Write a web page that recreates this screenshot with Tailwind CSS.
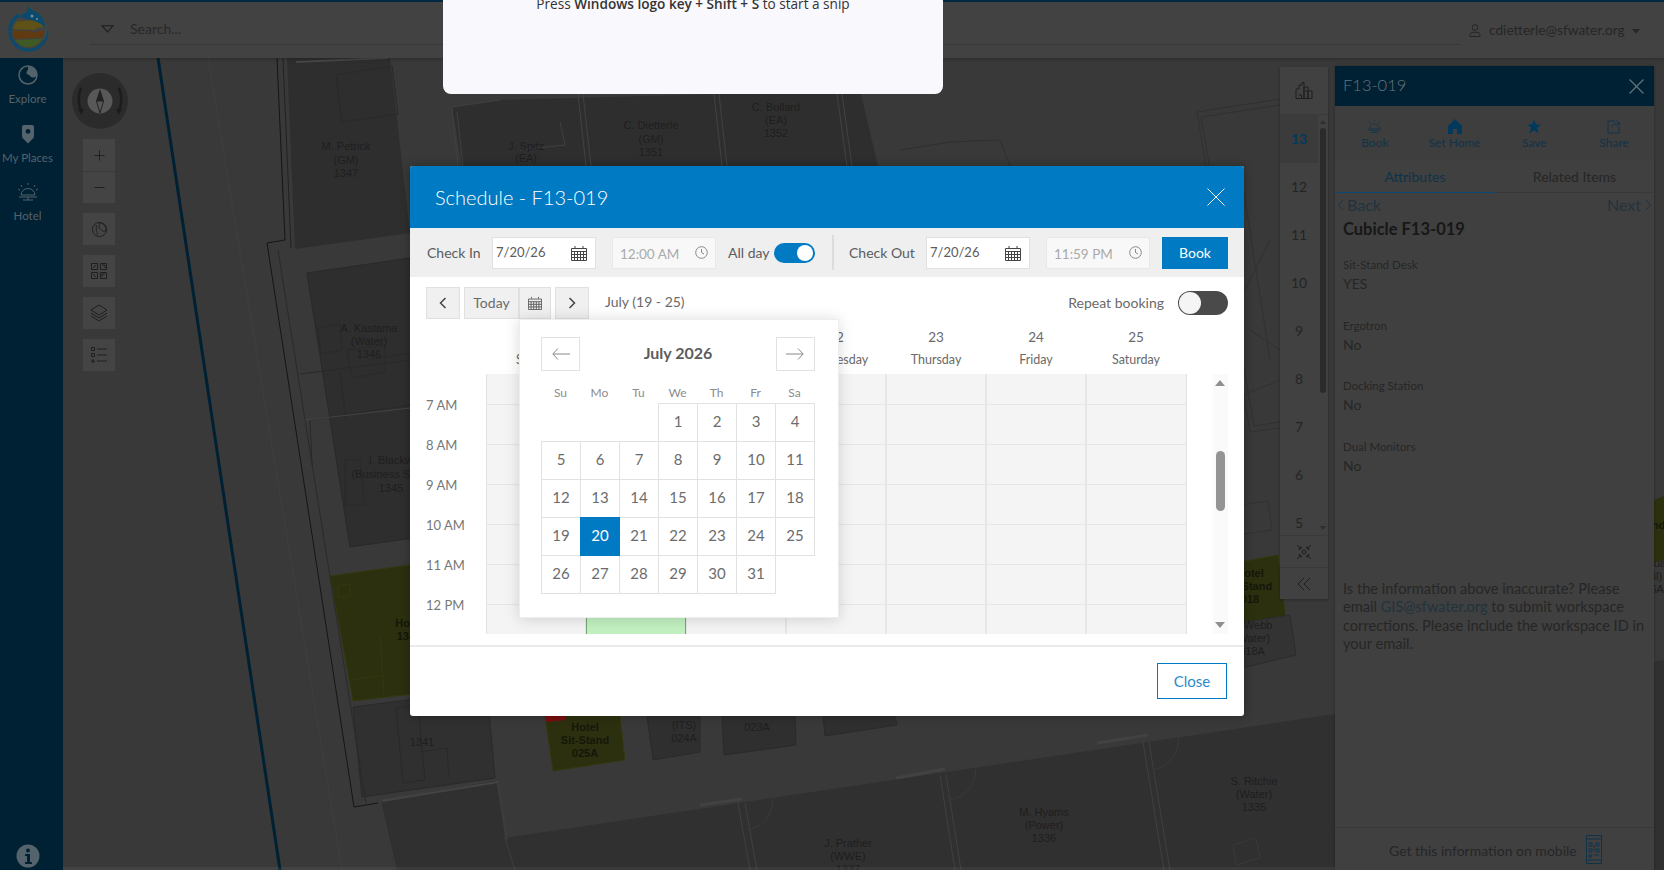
<!DOCTYPE html>
<html lang="en">
<head>
<meta charset="utf-8">
<title>Schedule - F13-019</title>
<script src="https://cdn.jsdelivr.net/npm/@tailwindcss/browser@4"></script>
</head>
<body class="m-0">
<div class="relative w-[1664px] h-[870px] overflow-hidden bg-[#393939] font-['Lato',sans-serif] flex flex-col">

  <!-- floor plan canvas -->
  <svg class="absolute inset-0" width="1664" height="870" viewBox="0 0 1664 870" fill="none">
    <path d="M208 58 L342 870" stroke="#3f3f3f"/>
    <path d="M158 58 L280 870" stroke="#002033" stroke-width="3"/>
    <!-- left rooms -->
    <path d="M287 58 L390 58 L410 233 L295 249 Z" fill="#2e2e2e"/>
    <path d="M307 273 L430 255 L470 530 L350 547 Z" fill="#2e2e2e" stroke="#292929"/>
    <path d="M330 576 L430 562 L447 690 L353 701 Z" fill="#2c300f" stroke="#34390f"/>
    <path d="M353 707 L487 690 L495 778 L362 797 Z" fill="#303030" stroke="#292929"/>
    <path d="M277 58 L285 240 L267 243 L354 807 L378 803" stroke="#151515"/>
    <path d="M283 58 L291 248" stroke="#222"/>
    <path d="M278 250 L366 803" stroke="#2a2a2a"/>
    <path d="M296 62 L388 58" stroke="#474747" stroke-width="2"/>
    <path d="M336 75 L392 66 L398 114 L342 122 Z M366 360 L430 350 M318 328 L340 324 L342 350 L321 354 Z M347 350 L385 345 L385 372 L352 378 Z M300 374 L410 360 M310 420 L410 405 M345 460 L360 460 L365 505 L345 505 Z" stroke="#292929"/>
    <path d="M310 420 L312 465 M340 372 L346 420" stroke="#292929"/>
    <path d="M305 420 L410 408" stroke="#444"/>
    <path d="M338 586 L350 584 L350 596 L338 598 Z M380 635 L384 695 M350 680 L383 675" stroke="#333810"/>
    <path d="M396 708 L418 705 L425 780 L403 783 Z M420 752 L447 748 L449 775" stroke="#292929"/>
    <!-- top rooms -->
    <path d="M452 107 L500 100 L860 90 L878 166 L462 166 Z" fill="#2e2e2e"/>
    <path d="M578 94 L586 166 M583 94 L591 166 M714 94 L722 166 M719 94 L727 166 M837 94 L847 166 M842 94 L852 166" stroke="#424242"/>
    <path d="M452 107 L500 100 M452 107 L458 166 M457 112 L463 166 M560 122 L565 145 L520 150" stroke="#404040"/>
    <path d="M900 150 L950 142 L1000 140 L1010 166" stroke="#2f2f2f"/>
    <path d="M1197 112 L1280 99 M1201 117 L1280 105 M1197 112 L1250 432 L1280 428 M1201 117 L1254 426 L1280 422 M1242 180 L1270 360 M1270 240 L1230 320 M1244 395 L1280 380" stroke="#313131"/>
    <path d="M1240 505 L1268 501 L1272 530 L1244 534 M1250 330 L1280 350" stroke="#313131"/>
    <!-- green desks -->
    <path d="M1240 562 L1278 555 L1286 620 L1240 628 Z" fill="#2c300f" stroke="#34390f"/>
    <path d="M1225 625 L1290 615 L1296 655 L1225 672 Z" fill="#333" stroke="#2c2c2c"/>
    <path d="M1654 500 L1664 496 L1664 560 L1654 562 Z" fill="#2c300f"/>
    <path d="M545 716 L620 716 L625 760 L553 771 Z" fill="#2c300f" stroke="#34390f"/>
    <path d="M545 716 L566 716 L566 720 L546 722 Z" fill="#7a0f0f"/>
    <path d="M647 716 L700 716 L700 752 L653 760 Z" fill="#2f2f2f" stroke="#2a2a2a"/>
    <path d="M722 716 L795 716 L796 745 L724 755 Z" fill="#2f2f2f" stroke="#2a2a2a"/>
    <path d="M823 716 L895 716 L897 725 L825 736 Z" fill="#2f2f2f" stroke="#2a2a2a"/>
    <!-- bottom rooms -->
    <path d="M380 800 L496 780 L505 838 L1335 714 L1664 660 L1664 870 L395 870 Z" fill="#303030"/>
    <path d="M496 780 L380 800 L396 870 M505 838 L515 870 M498 782 L507 840" stroke="#3f3f3f"/>
    <path d="M382 801 L498 782" stroke="#444" stroke-width="2"/>
    <path d="M700 805 L742 799 M896 778 L945 769 M1097 743 L1148 735" stroke="#424242" stroke-width="3"/>
    <path d="M738 803 L750 870 M745 803 L757 870 M940 775 L955 870 M946 775 L961 870 M1143 742 L1164 870 M1149 742 L1170 870" stroke="#404040"/>
    <path d="M747 830 Q772 825 773 798 M950 800 Q975 795 976 767 M1153 770 Q1178 765 1179 735 M504 838 Q528 830 530 805" stroke="#3a3a3a"/>
    <path d="M1233 845 L1256 838 L1260 858 L1236 865 Z" stroke="#393939"/>
    <g font-family="'Liberation Sans',sans-serif" font-size="11" fill="#1e1e1e" text-anchor="middle">
      <text x="346" y="150">M. Petrick</text><text x="346" y="164">(GM)</text><text x="346" y="177">1347</text>
      <text x="369" y="332">A. Kastama</text><text x="369" y="345">(Water)</text><text x="369" y="358">1346</text>
      <text x="400" y="464">I. Blackwood</text><text x="400" y="478">(Business Services)</text><text x="391" y="492">1345</text>
      <text x="409" y="627" font-weight="700" fill="#15170a">Hotel</text><text x="409" y="640" font-weight="700" fill="#15170a">1344</text>
      <text x="422" y="746">1341</text>
      <text x="526" y="150">J. Spitz</text><text x="526" y="162">(EA)</text>
      <text x="651" y="129">C. Dietterle</text><text x="651" y="143">(GM)</text><text x="651" y="156">1351</text>
      <text x="776" y="111">C. Bollard</text><text x="776" y="124">(EA)</text><text x="776" y="137">1352</text>
      <text x="585" y="731" font-weight="700" fill="#15170a">Hotel</text><text x="585" y="744" font-weight="700" fill="#15170a">Sit-Stand</text><text x="585" y="757" font-weight="700" fill="#15170a">025A</text>
      <text x="684" y="729">(ITS)</text><text x="684" y="742">024A</text>
      <text x="757" y="731">023A</text>
      <text x="1250" y="577" font-weight="700" fill="#15170a">Hotel</text><text x="1248" y="590" font-weight="700" fill="#15170a">Sit-Stand</text><text x="1250" y="603" font-weight="700" fill="#15170a">018</text>
      <text x="1252" y="629">L. Webb</text><text x="1252" y="642">(Water)</text><text x="1252" y="655">018A</text>
      <text x="1254" y="785">S. Ritchie</text><text x="1254" y="798">(Water)</text><text x="1254" y="811">1335</text>
      <text x="1044" y="816">M. Hyams</text><text x="1044" y="829">(Power)</text><text x="1044" y="842">1336</text>
      <text x="848" y="847">J. Prather</text><text x="848" y="860">(WWE)</text><text x="848" y="873">1337</text>
      <text x="1641" y="529" font-weight="700" fill="#15170a">Sit-Stand</text>
      <text x="1657" y="567">Dual</text><text x="1648" y="580">(Civil)</text><text x="1651" y="593">016A</text>
    </g>
  </svg>

  <!-- top strip + header -->
  <div class="relative h-[2px] shrink-0 bg-[#002a44]"></div>
  <header class="relative h-[56px] shrink-0 bg-[#424242] flex items-stretch shadow-[0_1px_4px_rgba(0,0,0,0.25)]">
    <div class="w-[90px] shrink-0 pl-[7px] pt-[2px]">
      <svg width="44" height="50" viewBox="0 0 44 50" fill="none">
        <clipPath id="logoClip"><circle cx="21.500" cy="27.500" r="15.500"/></clipPath>
        <path d="M3 27.500 A18.500 18.500 0 0 0 40 27.500" stroke="#0b4a6d" stroke-width="3"/>
        <path d="M36 36 A18.500 18.500 0 0 0 38 19" stroke="#3c4a4e" stroke-width="2"/>
        <path d="M3 27.500 C 3 20, 6 14, 12 11" stroke="#0b4a6d" stroke-width="3.500"/>
        <g clip-path="url(#logoClip)">
          <path d="M4 18 L40 15 L40 23 L30 24 L28 26 L4 25 Z" fill="#5f5216"/>
          <path d="M4 26.500 L24 27 L22 29 L40 26 L40 33 L4 35 Z" fill="#613a0f"/>
          <path d="M4 36 L40 34.500 L40 46 L4 46 Z" fill="#3f5a22"/>
        </g>
        <path d="M13 13 C 14 10, 17 9, 20 8 L 20 2 L 25 6 C 33 9, 38 15, 38 23 C 33 19, 29 17, 24 16 C 20 15, 16 14, 13 13 Z" fill="#0b4a6d"/>
        <circle cx="25" cy="12" r="1.500" fill="#6f8ea0"/><circle cx="30" cy="15" r="1" fill="#6f8ea0"/>
      </svg>
    </div>
    <div class="flex-1 h-[43px] flex items-center pt-[11px] pl-[11px] border-b border-[#373737]">
      <svg width="13" height="8" viewBox="0 0 13 8" fill="none" class="mt-[1px]"><path d="M1 .8 H12 L6.500 7 Z" stroke="#1c1c1c" stroke-width="1.100"/></svg>
      <span class="ml-[16px] text-[14px] text-[#282828]">Search...</span>
    </div>
    <div class="w-[204px] shrink-0 flex items-center justify-start">
      <svg width="12" height="13" viewBox="0 0 12 13" fill="none" class="ml-[9px]"><circle cx="6" cy="3.500" r="2.800" stroke="#262626"/><path d="M1 12.500 V10.500 Q1 8.500 4 8.300 H8 Q11 8.500 11 10.500 V12.500 Z" stroke="#262626"/></svg>
      <span class="ml-[8px] text-[13.700px] text-[#262626]">cdietterle@sfwater.org</span>
      <svg width="8" height="5" viewBox="0 0 8 5" class="ml-[7px] mt-[2px]"><path d="M0 0 H8 L4 4.500 Z" fill="#262626"/></svg>
    </div>
  </header>

  <!-- body -->
  <div class="relative flex-1 flex min-h-0">
    <aside class="w-[63px] shrink-0 bg-[#002033] pr-[8px] flex flex-col items-center justify-between text-[11.500px] text-[#55636c]">
      <div class="flex flex-col items-center w-full">
        <svg width="20" height="20" viewBox="0 0 20 20" fill="none" class="mt-[7px]"><circle cx="10" cy="10" r="9" stroke="#55636c" stroke-width="1.500"/><path d="M10 1.500 C 16 2, 19 6, 18.500 11 C 15 14, 12 12, 11.500 10 C 8 10, 8 6, 10 5 Z" fill="#55636c"/></svg>
        <span class="mt-[5px] leading-[18px]">Explore</span>
        <svg width="12" height="19" viewBox="0 0 12 19" class="mt-[17px]"><path fill-rule="evenodd" d="M2 0 H10 Q12 0 12 2 V11 Q12 13 10 14.500 L6 18.500 L2 14.500 Q0 13 0 11 V2 Q0 0 2 0 Z M6 4 A2.400 2.400 0 1 0 6 8.800 A2.400 2.400 0 0 0 6 4 Z" fill="#55636c"/></svg>
        <span class="mt-[5px] leading-[18px]">My Places</span>
        <svg width="20" height="20" viewBox="0 0 20 20" fill="none" stroke="#55636c" class="mt-[15px]"><path d="M3 13 A7 6.500 0 0 1 17 13 Z M1 15 H19 M10 15 V18 M5 18 H15 M10 1 V3 M3 3 L4 5 M17 3 L16 5 M0 7 L2 8 M20 7 L18 8"/></svg>
        <span class="mt-[5px] leading-[18px]">Hotel</span>
      </div>
      <svg width="24" height="24" viewBox="0 0 24 24" class="mb-[2px]"><circle cx="12" cy="12" r="11.500" fill="#55636c"/><circle cx="12" cy="6.500" r="2" fill="#002033"/><path d="M9 10 H14 V18 H16 V20 H9 V18 H11 V12 H9 Z" fill="#002033"/></svg>
    </aside>

    <main class="relative flex-1">
      <!-- map tools -->
      <div class="absolute left-[8px] top-[15px] w-[56px] flex flex-col items-center">
        <div class="w-[56px] h-[56px] ml-[2px] rounded-full bg-[#2b2b2b] flex items-center justify-center">
          <svg width="56" height="56" viewBox="0 0 56 56" fill="none">
            <circle cx="28" cy="28" r="12.500" fill="#585858"/>
            <path d="M28 16 L32 28 H24 Z" fill="#222"/><path d="M24.500 28 H31.500 L28 40 Z" fill="#585858" stroke="#222"/>
            <path d="M9 15 C 6 22, 6 30, 9 38" stroke="#1c1c1c" stroke-width="2.500"/><path d="M47 15 C 50 22, 50 30, 47 38" stroke="#1c1c1c" stroke-width="2.500"/>
            <path d="M6 36 L12 36 L9.500 42 Z M44 36 L50 36 L46.500 42 Z" fill="#1c1c1c"/>
          </svg>
        </div>
        <div class="mt-[10px] w-[32px] flex flex-col gap-px">
          <div class="h-[32px] bg-[#444] flex items-center justify-center"><svg width="11" height="11" viewBox="0 0 11 11" stroke="#1f1f1f"><path d="M5.500 .500 V10.500 M.500 5.500 H10.500"/></svg></div>
          <div class="h-[31px] bg-[#444] flex items-center justify-center"><svg width="11" height="3" viewBox="0 0 11 3" stroke="#1f1f1f"><path d="M.500 1.500 H10.500"/></svg></div>
        </div>
        <div class="mt-[10px] w-[32px] h-[32px] bg-[#444] flex items-center justify-center"><svg width="17" height="17" viewBox="0 0 18 18" fill="none" stroke="#1f1f1f"><circle cx="9" cy="9" r="7.500"/><path d="M9 1.500 C 14 3, 16 6, 16 10 C 13 12, 11 10, 10 8 C 8 8, 8 5, 9 4 Z" stroke="#1f1f1f"/><path d="M5 4 C 7 7, 4 10, 7 12 L 6 15"/></svg></div>
        <div class="mt-[10px] w-[32px] h-[32px] bg-[#444] flex items-center justify-center"><svg width="18" height="18" viewBox="0 0 18 18" fill="none" stroke="#1f1f1f"><path d="M1.500 1.500 H7.500 V7.500 H1.500 Z M10.500 1.500 H16.500 V7.500 H10.500 Z M1.500 10.500 H7.500 V16.500 H1.500 Z M10.500 10.500 H16.500 V16.500 H10.500 Z M3 6 L6 3 M12 3 H15 V6 M3 12 L6 15 M12 15 V12 H15"/></svg></div>
        <div class="mt-[10px] w-[32px] h-[32px] bg-[#444] flex items-center justify-center"><svg width="18" height="18" viewBox="0 0 18 18" fill="none" stroke="#1f1f1f"><path d="M9 1 L17 6 L9 11 L1 6 Z M1 9 L9 14 L17 9 M1 12 L9 17 L17 12"/></svg></div>
        <div class="mt-[10px] w-[32px] h-[32px] bg-[#444] flex items-center justify-center"><svg width="16" height="16" viewBox="0 0 16 16" fill="none" stroke="#1f1f1f"><path d="M6 2 H16 M6 8 H16 M6 14 H16 M.500 .500 H3.500 V3.500 H.500 Z M.500 6.500 H3.500 V9.500 H.500 Z M.500 15 L2 12.500 L3.500 15 Z"/></svg></div>
      </div>
    </main>

    <!-- floor picker -->
    <div class="absolute left-[1280px] top-[9px] w-[48px] h-[532px] bg-[#414141] flex flex-col shadow-[0_1px_3px_rgba(0,0,0,0.3)] text-[14px] text-[#242424]">
      <div class="h-[48px] shrink-0 border-b border-[#3a3a3a] flex items-center justify-center"><svg width="18" height="17" viewBox="0 0 18 17" fill="none" stroke="#1e1e1e"><path d="M1 16.500 V7 H4 V3 H7 V.500 H9 V16.500 Z M9 16.500 V5 H13 V16.500 Z M13 16.500 V9 H17 V16.500 H1 M3.500 13 H6.500 V16 M11 8 V10"/></svg></div>
      <div class="relative h-[420px] shrink-0 overflow-hidden">
        <div class="w-[38px] h-[48px] pb-[2px] flex items-center justify-center bg-[#3b3b3b] font-bold text-[#003a5f]">13</div>
        <div class="w-[38px] h-[48px] pb-[2px] flex items-center justify-center">12</div>
        <div class="w-[38px] h-[48px] pb-[2px] flex items-center justify-center">11</div>
        <div class="w-[38px] h-[48px] pb-[2px] flex items-center justify-center">10</div>
        <div class="w-[38px] h-[48px] pb-[2px] flex items-center justify-center">9</div>
        <div class="w-[38px] h-[48px] pb-[2px] flex items-center justify-center">8</div>
        <div class="w-[38px] h-[48px] pb-[2px] flex items-center justify-center">7</div>
        <div class="w-[38px] h-[48px] pb-[2px] flex items-center justify-center">6</div>
        <div class="w-[38px] h-[48px] pb-[2px] flex items-center justify-center">5</div>
        <div class="absolute left-[40px] top-[13px] w-[6px] h-[265px] rounded-full bg-[#2b2b2b]"></div>
        <div class="absolute left-[40px] top-[5px] w-0 h-0 border-x-[3px] border-x-transparent border-b-[4px] border-b-[#2e2e2e]"></div>
        <div class="absolute left-[40px] top-[411px] w-0 h-0 border-x-[3px] border-x-transparent border-t-[4px] border-t-[#2e2e2e]"></div>
      </div>
      <div class="h-[32px] shrink-0 border-t border-[#3a3a3a] flex items-center justify-center"><svg width="16" height="16" viewBox="0 0 16 16" fill="none" stroke="#1e1e1e"><circle cx="8" cy="8" r="1.800"/><path d="M1 1 L5 5 M5 2 V5 H2 M15 1 L11 5 M11 2 V5 H14 M1 15 L5 11 M5 14 V11 H2 M15 15 L11 11 M11 14 V11 H14"/></svg></div>
      <div class="h-[32px] shrink-0 border-t border-[#3a3a3a] flex items-center justify-center"><svg width="14" height="14" viewBox="0 0 14 14" fill="none" stroke="#1e1e1e"><path d="M7 1 L1 7 L7 13 M13 1 L7 7 L13 13"/></svg></div>
    </div>

    <!-- side panel -->
    <aside class="absolute left-[1335px] top-[8px] bottom-0 w-[319px] bg-[#404040] flex flex-col shadow-[0_0_3px_rgba(0,0,0,0.3)]">
      <div class="h-[40px] shrink-0 bg-[#002033] flex items-center justify-between pl-[8px] pr-[10px]">
        <span class="text-[16.500px] font-light text-[#66747c] -mt-[2px]">F13-019</span>
        <svg width="15" height="15" viewBox="0 0 15 15" stroke="#66747c" stroke-width="1.200"><path d="M.500 .500 L14.500 14.500 M14.500 .500 L.500 14.500"/></svg>
      </div>
      <div class="h-[55px] shrink-0 flex text-[12px] text-[#0f3349] bg-[#3e3e3e]">
        <div class="w-[80px] flex flex-col items-center pt-[13px]"><svg width="15" height="15" viewBox="0 0 20 20" fill="none" stroke="#0f3349"><path d="M3 13 A7 6.500 0 0 1 17 13 Z M1 15 H19 M10 15 V18 M5 18 H15 M10 1 V3 M3 3 L4 5 M17 3 L16 5"/></svg><span class="mt-[1px] leading-[15px]">Book</span></div>
        <div class="w-[80px] flex flex-col items-center pt-[13px]"><svg width="14" height="15" viewBox="0 0 14 15"><path d="M7 0 L14 7 V15 H9 V10 H5 V15 H0 V7 Z" fill="#00395c"/></svg><span class="mt-[1px] leading-[15px]">Set Home</span></div>
        <div class="w-[80px] flex flex-col items-center pt-[13px]"><svg width="14" height="15" viewBox="0 0 14 14"><path d="M7 0 L9 5 H14 L10 8.300 L11.500 14 L7 10.700 L2.500 14 L4 8.300 L0 5 H5 Z" fill="#00395c"/></svg><span class="mt-[1px] leading-[15px]">Save</span></div>
        <div class="w-[80px] flex flex-col items-center pt-[13px]"><svg width="14" height="15" viewBox="0 0 14 14" fill="none" stroke="#0f3349"><path d="M8 1.500 H1 V13.500 H12 V7 M5 8 C 5 5, 8 4, 12 4 M9.500 1 L13 4 L9.500 7"/></svg><span class="mt-[1px] leading-[15px]">Share</span></div>
      </div>
      <div class="h-[32px] shrink-0 flex text-[14px] border-b border-[#383838]">
        <div class="w-[160px] h-[32px] flex items-center justify-center text-[#0f3349] border-b border-[#0b4a70]">Attributes</div>
        <div class="flex-1 flex items-center justify-center text-[#262626]">Related Items</div>
      </div>
      <div class="flex justify-between items-center h-[24px] px-[3px] text-[16px] text-[#22333e]">
        <span class="flex items-center gap-[3px]"><svg width="6" height="12" viewBox="0 0 6 12" fill="none" stroke="#22333e"><path d="M5.500 .500 L.500 6 L5.500 11.500"/></svg>Back</span>
        <span class="flex items-center gap-[4px]">Next<svg width="6" height="12" viewBox="0 0 6 12" fill="none" stroke="#22333e"><path d="M.500 .500 L5.500 6 L.500 11.500"/></svg></span>
      </div>
      <div class="px-[8px] flex flex-col flex-1 text-[#262626]">
        <div class="h-[24px] leading-[24px] text-[16.500px] font-bold text-[#171717]">Cubicle F13-019</div>
        <div class="mt-[16px] text-[11.500px] leading-[16px]">Sit-Stand Desk</div>
        <div class="text-[14px] leading-[21px]">YES</div>
        <div class="mt-[23.500px] text-[11.500px] leading-[16px]">Ergotron</div>
        <div class="text-[14px] leading-[21px]">No</div>
        <div class="mt-[23.500px] text-[11.500px] leading-[16px]">Docking Station</div>
        <div class="text-[14px] leading-[21px]">No</div>
        <div class="mt-[23.500px] text-[11.500px] leading-[16px]">Dual Monitors</div>
        <div class="text-[14px] leading-[21px]">No</div>
        <p class="mt-[104.500px] w-[305px] text-[14.600px] leading-[18.300px]">Is the information above inaccurate? Please email <span class="text-[#22333e]">GIS@sfwater.org</span> to submit workspace corrections. Please include the workspace ID in your email.</p>
      </div>
      <div class="h-[43px] shrink-0 border-t border-[#383838] flex items-center pl-[54px] text-[14px] text-[#262626]">
        <span class="mt-[2px]">Get this information on mobile</span>
        <svg width="16" height="29" viewBox="0 0 16 29" fill="none" stroke="#0f3349" class="ml-[9px]"><path d="M.500 .500 H15.500 V28.500 H.500 Z M.500 4 H15.500 M.500 25 H15.500 M3 8 H6 V11 H3 Z M10 8 H13 V11 H10 Z M3 14 H6 V17 H3 Z M10 14 H13 V17 H10 Z M3 20 H6 V22 H3 Z M8 10 V16 M8 20 H13"/></svg>
      </div>
    </aside>
  </div>
  <div class="absolute left-[63px] right-[329px] bottom-0 h-[3px] bg-white/5"></div>

  <!-- snip toast -->
  <div class="absolute left-[443px] top-0 w-[500px] h-[94px] bg-[#f9f8fc] rounded-b-[8px] text-center font-['Open_Sans',sans-serif] text-[13.600px] text-[#333] leading-[20px]">
    <div class="-mt-[6px]">Press <b class="font-semibold">Windows logo key + Shift + S</b> to start a snip</div>
  </div>

  <!-- schedule modal -->
  <section class="absolute left-[410px] top-[166px] w-[834px] h-[550px] bg-white rounded-[3px] flex flex-col overflow-hidden text-[#6a6a6a] shadow-[0_0_10px_rgba(0,0,0,0.3)]">
    <div class="h-[62px] shrink-0 bg-[#007ac2] flex items-center justify-between pl-[25px] pr-[19px]">
      <h2 class="text-[20px] font-light text-white -mt-px">Schedule - F13-019</h2>
      <svg width="18" height="18" viewBox="0 0 18 18" stroke="#fff"><path d="M.500 .500 L17.500 17.500 M17.500 .500 L.500 17.500"/></svg>
    </div>
    <div class="h-[49px] shrink-0 bg-[#efefef] flex items-center pl-[17px] text-[14px] text-[#5c5c5c]">
      <span class="w-[65px]">Check In</span>
      <div class="w-[104px] h-[32px] bg-white border border-[#e0e0e0] flex items-center justify-between pl-[3px] pr-[8px] text-[13px] text-[#5c5c5c]"><span class="mt-px">7/20/26</span>
        <svg width="16" height="16" viewBox="0 0 16 16" fill="none" stroke="#444"><path d="M.500 3.500 H15.500 V15.500 H.500 Z M.500 6.500 H15.500 M.500 9.500 H15.500 M.500 12.500 H15.500 M3.500 6.500 V15.500 M6.500 6.500 V15.500 M9.500 6.500 V15.500 M12.500 6.500 V15.500 M4 1 V3 M12 1 V3"/></svg></div>
      <div class="ml-[16px] w-[104px] h-[32px] bg-[#f8f8f8] border border-[#e8e8e8] flex items-center justify-between pl-[7px] pr-[7px] text-[13.500px] text-[#aaa]"><span class="mt-[3px]">12:00 AM</span>
        <svg width="13" height="13" viewBox="0 0 13 13" fill="none" stroke="#888"><circle cx="6.500" cy="6.500" r="5.800"/><path d="M6.500 3 V6.500 L9 8"/></svg></div>
      <span class="ml-[12px] w-[46px]">All day</span>
      <div class="w-[41px] h-[20px] rounded-full bg-[#007ac2] flex items-center justify-end pr-[2px]"><div class="w-[16px] h-[16px] rounded-full bg-white"></div></div>
      <div class="ml-[17px] w-[2px] h-[35px] bg-[#dcdcdc]"></div>
      <span class="ml-[15px] w-[77px]">Check Out</span>
      <div class="w-[104px] h-[32px] bg-white border border-[#e0e0e0] flex items-center justify-between pl-[3px] pr-[8px] text-[13px] text-[#5c5c5c]"><span class="mt-px">7/20/26</span>
        <svg width="16" height="16" viewBox="0 0 16 16" fill="none" stroke="#444"><path d="M.500 3.500 H15.500 V15.500 H.500 Z M.500 6.500 H15.500 M.500 9.500 H15.500 M.500 12.500 H15.500 M3.500 6.500 V15.500 M6.500 6.500 V15.500 M9.500 6.500 V15.500 M12.500 6.500 V15.500 M4 1 V3 M12 1 V3"/></svg></div>
      <div class="ml-[16px] w-[104px] h-[32px] bg-[#f8f8f8] border border-[#e8e8e8] flex items-center justify-between pl-[7px] pr-[7px] text-[13.500px] text-[#aaa]"><span class="mt-[3px]">11:59 PM</span>
        <svg width="13" height="13" viewBox="0 0 13 13" fill="none" stroke="#888"><circle cx="6.500" cy="6.500" r="5.800"/><path d="M6.500 3 V6.500 L9 8"/></svg></div>
      <button class="ml-[12px] w-[66px] h-[32px] bg-[#007ac2] text-white text-[14px]">Book</button>
    </div>

    <div class="h-[42px] shrink-0 flex items-end pl-[16px] pr-[16px] text-[14px]">
      <button class="w-[34px] h-[32px] bg-[#f0f0f0] border border-[#e0e0e0] flex items-center justify-center"><svg width="8" height="12" viewBox="0 0 8 12" fill="none" stroke="#444" stroke-width="1.500"><path d="M6.500 1 L1.500 6 L6.500 11"/></svg></button>
      <button class="ml-[4px] w-[55px] h-[32px] pb-[2px] bg-[#f0f0f0] border border-[#e0e0e0]">Today</button>
      <button class="w-[32px] h-[32px] bg-[#f0f0f0] border border-[#e0e0e0] flex items-center justify-center"><svg width="14" height="14" viewBox="0 0 16 16" fill="none" stroke="#555"><path d="M.500 3.500 H15.500 V15.500 H.500 Z M.500 6.500 H15.500 M.500 9.500 H15.500 M.500 12.500 H15.500 M3.500 6.500 V15.500 M6.500 6.500 V15.500 M9.500 6.500 V15.500 M12.500 6.500 V15.500 M4 1 V3 M12 1 V3"/></svg></button>
      <button class="ml-[4px] w-[34px] h-[32px] bg-[#f0f0f0] border border-[#e0e0e0] flex items-center justify-center"><svg width="8" height="12" viewBox="0 0 8 12" fill="none" stroke="#444" stroke-width="1.500"><path d="M1.500 1 L6.500 6 L1.500 11"/></svg></button>
      <span class="ml-[16px] h-[32px] leading-[30px]">July (19 - 25)</span>
      <div class="ml-auto h-[32px] flex items-center">
        <span class="mr-[14px] -mt-[2px] -ml-px">Repeat booking</span>
        <div class="w-[50px] h-[24px] rounded-full bg-[#4a4a4a] flex items-center"><div class="w-[22px] h-[22px] ml-px rounded-full bg-[#f5f5f5]"></div></div>
      </div>
    </div>

    <!-- week header -->
    <div class="h-[55px] shrink-0 pl-[76px] flex text-[#6a6a6a]">
      <div class="w-[100px] flex flex-col items-center pt-[8px]"><span class="text-[13.500px] leading-[20px]">19</span><span class="text-[12.500px] leading-[26px]">Sunday</span></div>
      <div class="w-[100px] flex flex-col items-center pt-[8px]"><span class="text-[13.500px] leading-[20px]">20</span><span class="text-[12.500px] leading-[26px]">Monday</span></div>
      <div class="w-[100px] flex flex-col items-center pt-[8px]"><span class="text-[13.500px] leading-[20px]">21</span><span class="text-[12.500px] leading-[26px]">Tuesday</span></div>
      <div class="w-[100px] flex flex-col items-center pt-[8px]"><span class="text-[13.500px] leading-[20px]">22</span><span class="text-[12.500px] leading-[26px]">Wednesday</span></div>
      <div class="w-[100px] flex flex-col items-center pt-[8px]"><span class="text-[13.500px] leading-[20px]">23</span><span class="text-[12.500px] leading-[26px]">Thursday</span></div>
      <div class="w-[100px] flex flex-col items-center pt-[8px]"><span class="text-[13.500px] leading-[20px]">24</span><span class="text-[12.500px] leading-[26px]">Friday</span></div>
      <div class="w-[100px] flex flex-col items-center pt-[8px]"><span class="text-[13.500px] leading-[20px]">25</span><span class="text-[12.500px] leading-[26px]">Saturday</span></div>
    </div>

    <!-- week grid -->
    <div class="h-[260px] shrink-0 flex pl-[16px]">
      <div class="w-[60px] shrink-0 pt-[12px] text-[13px] text-[#777] overflow-hidden">
        <div class="h-[40px] flex items-center">7 AM</div>
        <div class="h-[40px] flex items-center">8 AM</div>
        <div class="h-[40px] flex items-center">9 AM</div>
        <div class="h-[40px] flex items-center">10 AM</div>
        <div class="h-[40px] flex items-center">11 AM</div>
        <div class="h-[40px] flex items-center">12 PM</div>
      </div>
      <div class="w-[701px] shrink-0 flex border-l border-[#e2e2e2] bg-[#f4f4f4] bg-[linear-gradient(#e6e6e6_1px,transparent_1px)] bg-[length:100%_40px] bg-[position:0_30px]">
        <div class="w-[100px] border-r-2 border-[#e6e6e6]"></div>
        <div class="w-[100px] border-r-2 border-[#e6e6e6] relative"><div class="absolute -left-px -right-[1px] top-[200px] bottom-0 bg-[#c2f0c0] border-x border-[#74a874]"></div></div>
        <div class="w-[100px] border-r-2 border-[#e6e6e6]"></div>
        <div class="w-[100px] border-r-2 border-[#e6e6e6]"></div>
        <div class="w-[100px] border-r-2 border-[#e6e6e6]"></div>
        <div class="w-[100px] border-r-2 border-[#e6e6e6]"></div>
        <div class="w-[100px] border-r border-[#e2e2e2]"></div>
      </div>
      <div class="ml-[26px] w-[15px] relative bg-[#fafafa]">
        <div class="absolute left-[2px] top-[6px] w-0 h-0 border-x-[5px] border-x-transparent border-b-[6px] border-b-[#8f8f8f]"></div>
        <div class="absolute left-[3px] top-[77px] w-[9px] h-[60px] rounded-full bg-[#949494]"></div>
        <div class="absolute left-[2px] top-[248px] w-0 h-0 border-x-[5px] border-x-transparent border-t-[6px] border-t-[#8f8f8f]"></div>
      </div>
    </div>

    <div class="mt-[11px] flex-1 border-t-2 border-[#ebebeb] flex justify-end pr-[17px] pt-[16px]">
      <button class="w-[70px] h-[36px] border border-[#007ac2] text-[#2a8ccc] text-[15px]">Close</button>
    </div>

    <!-- date picker popover -->
    <div class="absolute left-[109px] top-[153px] w-[320px] h-[299px] bg-white pl-[21px] pt-[17px] shadow-[0_1px_14px_rgba(0,0,0,0.15)] border border-[#eee]">
      <div class="flex items-center justify-between w-[274px]">
        <button class="w-[39px] h-[34px] border border-[#e2e2e2] flex items-center justify-center"><svg width="18" height="12" viewBox="0 0 18 12" fill="none" stroke="#888"><path d="M18 6 H1 M6 .500 L.800 6 L6 11.500"/></svg></button>
        <span class="text-[16px] font-bold text-[#5c5c5c] -mt-[3px]">July 2026</span>
        <button class="w-[39px] h-[34px] border border-[#e2e2e2] flex items-center justify-center"><svg width="18" height="12" viewBox="0 0 18 12" fill="none" stroke="#888"><path d="M0 6 H17 M12 .500 L17.200 6 L12 11.500"/></svg></button>
      </div>
      <div class="mt-[12px] grid grid-cols-[repeat(7,39px)] h-[20px] text-[12px] text-[#8c8c8c] text-center leading-[20px]">
        <span>Su</span><span>Mo</span><span>Tu</span><span>We</span><span>Th</span><span>Fr</span><span>Sa</span>
      </div>
      <div class="grid grid-cols-[repeat(7,39px)] auto-rows-[38px] text-[15px] text-[#6c6c6c] [&>div]:pb-[2px]">
        <div></div><div></div><div></div>
        <div class="w-[40px] h-[39px] border border-[#e2e2e2] flex items-center justify-center">1</div>
        <div class="w-[40px] h-[39px] border border-[#e2e2e2] flex items-center justify-center">2</div>
        <div class="w-[40px] h-[39px] border border-[#e2e2e2] flex items-center justify-center">3</div>
        <div class="w-[40px] h-[39px] border border-[#e2e2e2] flex items-center justify-center">4</div>
        <div class="w-[40px] h-[39px] border border-[#e2e2e2] flex items-center justify-center">5</div>
        <div class="w-[40px] h-[39px] border border-[#e2e2e2] flex items-center justify-center">6</div>
        <div class="w-[40px] h-[39px] border border-[#e2e2e2] flex items-center justify-center">7</div>
        <div class="w-[40px] h-[39px] border border-[#e2e2e2] flex items-center justify-center">8</div>
        <div class="w-[40px] h-[39px] border border-[#e2e2e2] flex items-center justify-center">9</div>
        <div class="w-[40px] h-[39px] border border-[#e2e2e2] flex items-center justify-center">10</div>
        <div class="w-[40px] h-[39px] border border-[#e2e2e2] flex items-center justify-center">11</div>
        <div class="w-[40px] h-[39px] border border-[#e2e2e2] flex items-center justify-center">12</div>
        <div class="w-[40px] h-[39px] border border-[#e2e2e2] flex items-center justify-center">13</div>
        <div class="w-[40px] h-[39px] border border-[#e2e2e2] flex items-center justify-center">14</div>
        <div class="w-[40px] h-[39px] border border-[#e2e2e2] flex items-center justify-center">15</div>
        <div class="w-[40px] h-[39px] border border-[#e2e2e2] flex items-center justify-center">16</div>
        <div class="w-[40px] h-[39px] border border-[#e2e2e2] flex items-center justify-center">17</div>
        <div class="w-[40px] h-[39px] border border-[#e2e2e2] flex items-center justify-center">18</div>
        <div class="w-[40px] h-[39px] border border-[#e2e2e2] flex items-center justify-center">19</div>
        <div class="relative z-10 w-[40px] h-[39px] bg-[#007ac2] text-white flex items-center justify-center">20</div>
        <div class="w-[40px] h-[39px] border border-[#e2e2e2] flex items-center justify-center">21</div>
        <div class="w-[40px] h-[39px] border border-[#e2e2e2] flex items-center justify-center">22</div>
        <div class="w-[40px] h-[39px] border border-[#e2e2e2] flex items-center justify-center">23</div>
        <div class="w-[40px] h-[39px] border border-[#e2e2e2] flex items-center justify-center">24</div>
        <div class="w-[40px] h-[39px] border border-[#e2e2e2] flex items-center justify-center">25</div>
        <div class="w-[40px] h-[39px] border border-[#e2e2e2] flex items-center justify-center">26</div>
        <div class="w-[40px] h-[39px] border border-[#e2e2e2] flex items-center justify-center">27</div>
        <div class="w-[40px] h-[39px] border border-[#e2e2e2] flex items-center justify-center">28</div>
        <div class="w-[40px] h-[39px] border border-[#e2e2e2] flex items-center justify-center">29</div>
        <div class="w-[40px] h-[39px] border border-[#e2e2e2] flex items-center justify-center">30</div>
        <div class="w-[40px] h-[39px] border border-[#e2e2e2] flex items-center justify-center">31</div>
      </div>
    </div>
  </section>
</div>
</body>
</html>
